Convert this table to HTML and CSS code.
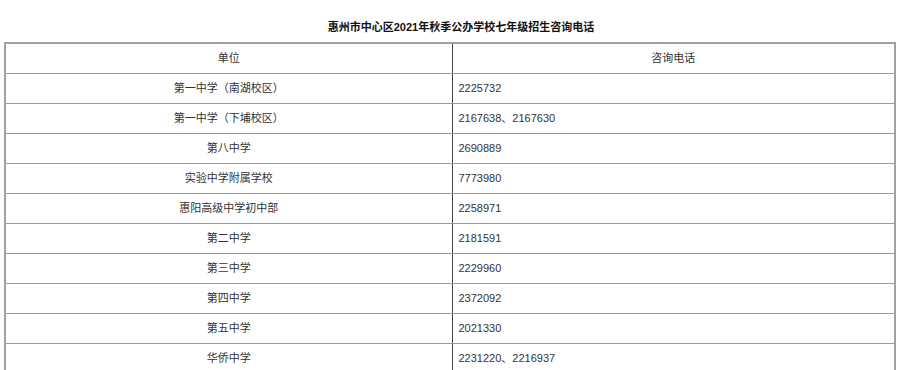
FILE: index.html
```html
<!DOCTYPE html>
<html lang="zh">
<head>
<meta charset="utf-8">
<title>惠州市中心区2021年秋季公办学校七年级招生咨询电话</title>
<link rel="stylesheet" href="styles.css">
</head>
<body>
<div class="page">
  <h1 class="title">惠州市中心区2021年秋季公办学校七年级招生咨询电话</h1>
  <table class="phones">
    <thead>
      <tr><th class="unit">单位</th><th class="tel-head">咨询电话</th></tr>
    </thead>
    <tbody>
      <tr><td class="unit">第一中学（南湖校区）</td><td class="tel">2225732</td></tr>
      <tr><td class="unit">第一中学（下埔校区）</td><td class="tel">2167638、2167630</td></tr>
      <tr><td class="unit">第八中学</td><td class="tel">2690889</td></tr>
      <tr><td class="unit">实验中学附属学校</td><td class="tel">7773980</td></tr>
      <tr><td class="unit">惠阳高级中学初中部</td><td class="tel">2258971</td></tr>
      <tr><td class="unit">第二中学</td><td class="tel">2181591</td></tr>
      <tr><td class="unit">第三中学</td><td class="tel">2229960</td></tr>
      <tr><td class="unit">第四中学</td><td class="tel">2372092</td></tr>
      <tr><td class="unit">第五中学</td><td class="tel">2021330</td></tr>
      <tr><td class="unit">华侨中学</td><td class="tel">2231220、2216937</td></tr>
    </tbody>
  </table>
</div>
</body>
</html>
```
FILE: styles.css
```css
html, body {
  margin: 0;
  padding: 0;
  background: #fff;
}
body {
  font-family: "Liberation Sans", Arial, "Noto Sans CJK SC", sans-serif;
  color: #333;
}
.page {
  padding: 20px 4px 0 4px;
}
.title {
  margin: 0 0 7px 0;
  padding-left: 22px;
  font-size: 11px;
  line-height: 15px;
  font-weight: bold;
  color: #111;
  text-align: center;
}
.phones {
  width: 892px;
  border-collapse: collapse;
  table-layout: fixed;
  font-size: 11px;
}
.phones th,
.phones td {
  box-sizing: border-box;
  height: 30px;
  padding: 0 6px;
  border-top: 1px solid #9a9a9a;
  border-bottom: 1px solid #9a9a9a;
  border-left: 1px solid #8a8a8a;
  border-right: 1px solid #8a8a8a;
  vertical-align: middle;
  font-weight: normal;
  line-height: 14px;
}
.phones .unit {
  width: 447px;
  text-align: center;
  border-left: 2px solid #a0a0a0;
  border-right: 1px solid #444;
}
.phones .tel-head {
  text-align: center;
  border-right: 2px solid #a0a0a0;
}
.phones .tel {
  text-align: left;
  border-right: 2px solid #a0a0a0;
}
.phones thead th {
  border-top: 2px solid #a0a0a0;
}
```
